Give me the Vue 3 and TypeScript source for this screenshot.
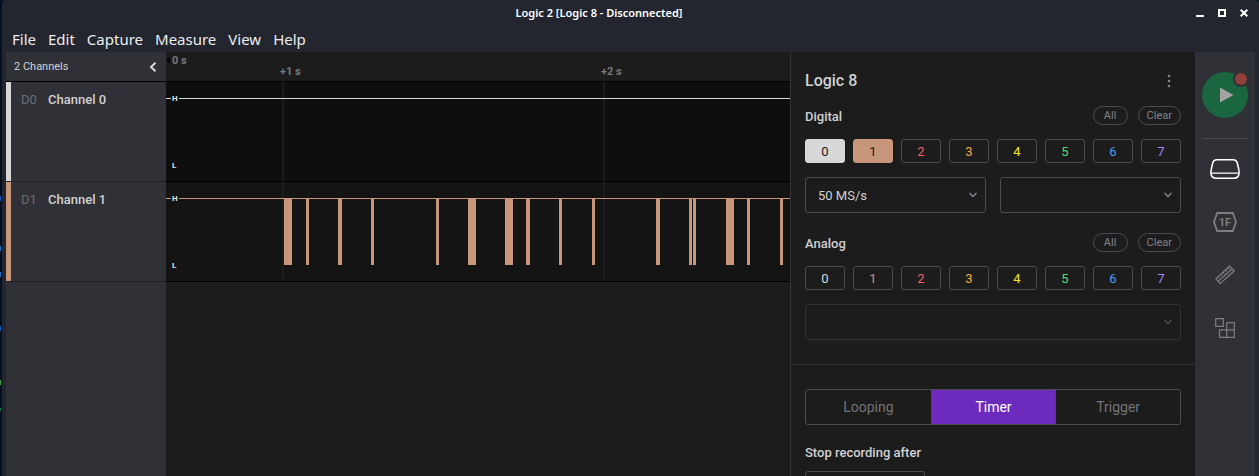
<script setup lang="ts">
import { ref } from 'vue'

interface Channel {
  id: string
  name: string
  color: string
  pulses: [number, number][]
}

const menus = ['File', 'Edit', 'Capture', 'Measure', 'View', 'Help']

const channels: Channel[] = [
  { id: 'D0', name: 'Channel 0', color: '#d8d8d8', pulses: [] },
  {
    id: 'D1',
    name: 'Channel 1',
    color: '#c8967a',
    pulses: [
      [118, 8], [140, 3], [172, 4], [205, 3], [270, 3], [302, 8], [339, 8], [360, 4],
      [393, 3], [426, 3], [490, 4], [523, 3], [527, 3], [560, 8], [581, 3], [614, 3],
    ],
  },
]

const ticks = [
  { x: 117, label: '+1 s' },
  { x: 438, label: '+2 s' },
]

const inputColors = ['#d8d8d8', '#c8967a', '#f0616d', '#f5a742', '#f5e731', '#50dc64', '#4a9ff5', '#a583f5']

const digital = ref([true, true, false, false, false, false, false, false])
const analog = ref<boolean[]>(Array(8).fill(false))
const mode = ref('Timer')
const modes = ['Looping', 'Timer', 'Trigger']
const duration = ref('')

const setAll = (list: boolean[], value: boolean) => list.fill(value)
</script>

<template>
  <div class="desktop">
    <svg class="wallpaper" aria-hidden="true">
      <rect y="196" width="1" height="5" fill="#0b4fb5" />
      <rect y="246" width="1" height="5" fill="#1d6fc4" />
      <rect y="272" width="1" height="5" fill="#1d6fc4" />
      <rect y="326" width="1" height="5" fill="#0b5cb5" />
      <rect y="380" width="1" height="5" fill="#3fa04a" />
      <rect y="408" width="1" height="3" fill="#127a4c" />
    </svg>
    <div class="window">
      <header class="titlebar">
        <h1>Logic 2 [Logic 8 - Disconnected]</h1>
        <div class="controls">
          <button type="button" aria-label="Minimize">
            <svg width="8" height="8"><path d="M0 6h8v2H0z" fill="#fff" /></svg>
          </button>
          <button type="button" aria-label="Maximize">
            <svg width="8" height="8"><path d="M1 1h6v6H1z" fill="none" stroke="#fff" stroke-width="2" /></svg>
          </button>
          <button type="button" aria-label="Close">
            <svg width="8" height="8"><path d="M.7 .7l6.6 6.6M7.3 .7L.7 7.3" stroke="#fff" stroke-width="2" /></svg>
          </button>
        </div>
      </header>
      <nav class="menubar">
        <button v-for="m in menus" :key="m" type="button">{{ m }}</button>
      </nav>

      <main class="workspace">
        <section class="scope">
          <div class="channel-head">
            <span>2 Channels</span>
            <button type="button" aria-label="Collapse channels">
              <svg width="8" height="10"><path d="M6.500 .7L2 5l4.500 4.300" fill="none" stroke="#d4d4d6" stroke-width="2" /></svg>
            </button>
          </div>
          <svg class="ruler">
            <path d="M0 8.500L4 5.500v6z" fill="#000" />
            <text x="6" y="12">0 s</text>
            <g v-for="t in ticks" :key="t.x">
              <text :x="t.x - 3" y="23">{{ t.label }}</text>
              <rect :x="t.x - 1" y="26" width="2" height="4" fill="#222" />
            </g>
          </svg>
          <template v-for="(c, i) in channels" :key="c.id">
            <div class="channel">
              <i class="stripe" :style="{ background: c.color }"></i>
              <span class="channel-id">{{ c.id }}</span>
              <span class="channel-name">{{ c.name }}</span>
            </div>
            <svg class="wave" :class="{ alt: i % 2 === 1 }">
              <rect v-for="t in ticks" :key="t.x" :x="t.x - 1" width="2" height="100%" class="grid-line" />
              <rect y="16" width="100%" height="1" :fill="c.color" />
              <rect v-for="p in c.pulses" :key="p[0]" :x="p[0]" y="16" :width="p[1]" height="67" :fill="c.color" />
              <rect x="5" y="12" width="8" height="9" class="tag-bg" />
              <text x="6" y="19">H</text>
              <text x="6" y="86">L</text>
            </svg>
          </template>
          <div class="sidebar-rest"></div>
          <div></div>
        </section>

        <aside class="panel">
          <section class="device">
            <div class="device-head">
              <h2>Logic 8</h2>
              <button type="button" class="more" aria-label="Device options">
                <svg width="4" height="14" fill="#85858c">
                  <circle cx="2" cy="2" r="1.300" /><circle cx="2" cy="7" r="1.300" /><circle cx="2" cy="12" r="1.300" />
                </svg>
              </button>
            </div>

            <div class="group-head">
              <h3>Digital</h3>
              <button type="button" class="pill" @click="setAll(digital, true)">All</button>
              <button type="button" class="pill" @click="setAll(digital, false)">Clear</button>
            </div>
            <div class="inputs">
              <button
                v-for="(color, n) in inputColors" :key="n" type="button"
                :class="{ on: digital[n] }" :aria-pressed="digital[n]"
                :style="{ '--tint': color }" @click="digital[n] = !digital[n]"
              >{{ n }}</button>
            </div>
            <div class="selects">
              <label class="select">
                <select aria-label="Sample rate"><option>50 MS/s</option></select>
                <svg width="10" height="6"><path d="M1.500 1L5 4.500 8.500 1" /></svg>
              </label>
              <label class="select">
                <select aria-label="Logic voltage"><option></option></select>
                <svg width="10" height="6"><path d="M1.500 1L5 4.500 8.500 1" /></svg>
              </label>
            </div>

            <div class="group-head second">
              <h3>Analog</h3>
              <button type="button" class="pill" @click="setAll(analog, true)">All</button>
              <button type="button" class="pill" @click="setAll(analog, false)">Clear</button>
            </div>
            <div class="inputs">
              <button
                v-for="(color, n) in inputColors" :key="n" type="button"
                :class="{ on: analog[n] }" :aria-pressed="analog[n]"
                :style="{ '--tint': color }" @click="analog[n] = !analog[n]"
              >{{ n }}</button>
            </div>
            <div class="selects">
              <label class="select disabled">
                <select aria-label="Analog sample rate" disabled><option></option></select>
                <svg width="10" height="6"><path d="M1.500 1L5 4.500 8.500 1" /></svg>
              </label>
            </div>
          </section>

          <section class="recording">
            <div class="modes" role="radiogroup" aria-label="Capture mode">
              <label v-for="m in modes" :key="m" :class="{ active: mode === m }">
                <input v-model="mode" type="radio" name="mode" :value="m" />{{ m }}
              </label>
            </div>
            <label class="field-label" for="duration">Stop recording after</label>
            <input id="duration" v-model="duration" class="duration" type="text" />
          </section>
        </aside>

        <nav class="rail">
          <button type="button" aria-label="Start capture">
            <svg width="46" height="46">
              <circle cx="23" cy="23" r="23" fill="#196640" />
              <path d="M18 15.500v15L31.500 23z" fill="#a3a3a3" />
              <circle cx="39" cy="7" r="8" fill="#303136" />
              <circle cx="39" cy="7" r="6" fill="#8f4038" />
            </svg>
          </button>
          <hr />
          <button type="button" class="tool" aria-label="Device">
            <svg width="30" height="20" fill="none" stroke="#fff" stroke-width="1.600">
              <path d="M7 .8h16c2.400 0 3.800 1.400 4.400 3.600.9 3 1.600 6.400 1.700 9.400.1 3-1.700 5.400-5.100 5.400H6C2.600 19.200 .8 16.800 .9 13.800 1 10.800 1.700 7.400 2.600 4.400 3.200 2.200 4.600.8 7 .8z" />
              <path d="M1 14.200h28" stroke="#d0d0d2" />
            </svg>
          </button>
          <button type="button" class="tool" aria-label="Analyzers">
            <svg width="24" height="20" fill="none" stroke="#7d7e82" stroke-width="1.800">
              <path d="M4.200 1h15.600L23 10l-3.200 9H4.200L1 10z" />
              <text x="12" y="14" text-anchor="middle" fill="#7d7e82" stroke="none">1F</text>
            </svg>
          </button>
          <button type="button" class="tool" aria-label="Measurements">
            <svg width="20" height="20" fill="none" stroke="#7d7e82" stroke-width="1.200">
              <path d="M.8 13.600L14.600 1.200l4.600 4.600L5 18.600z" />
              <path d="M3.200 16.400L17.200 3.800M3 11.600l1.500 1.600M5.400 9.400L7 11M7.900 7.200l1.500 1.600M10.300 5l1.500 1.600M12.700 2.900l1.500 1.600" />
            </svg>
          </button>
          <button type="button" class="tool" aria-label="Extensions">
            <svg width="20" height="20" fill="none" stroke="#7d7e82" stroke-width="1.200">
              <path d="M.7 .7h7.600v7.600H.7zM11.700 4.700h7.600v14.600H4.500v-7.400h14.800M11.700 4.700v14.600" />
            </svg>
          </button>
        </nav>
      </main>
    </div>
  </div>
</template>

<style>
body {
  background: #03101f;
}
</style>

<style scoped>
* {
  box-sizing: border-box;
}
.desktop {
  display: flex;
  height: 100vh;
  overflow: hidden;
  font-family: Roboto, "Liberation Sans", sans-serif;
  font-size: 13px;
  color: #d0d0d2;
}
.wallpaper {
  flex: none;
  width: 2px;
  height: 100%;
}
.window {
  flex: 1;
  min-width: 0;
  display: flex;
  flex-direction: column;
  background: #23262f;
  border-radius: 4px 4px 0 0;
}
button {
  margin: 0;
  padding: 0;
  border: 0;
  background: none;
  color: inherit;
  font: inherit;
  cursor: pointer;
}
svg {
  display: block;
}
h1, h2, h3 {
  margin: 0;
}
.titlebar {
  flex: none;
  display: flex;
  align-items: center;
  height: 26px;
  padding-right: 11px;
}
.titlebar h1 {
  flex: 1;
  text-align: center;
  font: 600 11px/26px "Noto Sans", sans-serif;
  color: #fff;
}
.controls {
  display: flex;
  gap: 14px;
}
.menubar {
  flex: none;
  display: flex;
  gap: 12px;
  height: 26px;
  padding-left: 10px;
  font: 15px/26px "Noto Sans", sans-serif;
  color: #eceded;
}
.workspace {
  flex: 1;
  min-height: 0;
  display: flex;
  margin: 0 4px;
  background: #1c1c1c;
}
.scope {
  flex: 1;
  min-width: 0;
  display: grid;
  grid-template-columns: 160px minmax(0, 1fr);
  grid-template-rows: 30px 100px 100px 1fr;
}
.channel-head {
  display: flex;
  align-items: center;
  justify-content: space-between;
  padding: 0 9px 0 8px;
  background: #303136;
  border-bottom: 1px solid #000;
  font-size: 11px;
}
.ruler {
  width: 100%;
  height: 30px;
  border-bottom: 1px solid #000;
  font-size: 11px;
  font-weight: 700;
  fill: #77777f;
}
.channel {
  display: flex;
  background: #303136;
  border-bottom: 1px solid #222226;
  font-weight: 500;
  line-height: 36px;
}
.stripe {
  width: 5px;
  margin-right: 10px;
}
.channel-id {
  width: 27px;
  color: #6c6d71;
  font-weight: 400;
}
.wave {
  width: 100%;
  height: 100px;
  background: #0e0e0e;
  border-bottom: 1px solid #000;
  --row: #0e0e0e;
}
.wave.alt {
  background: #141414;
  --row: #141414;
}
.wave text {
  font-size: 8px;
  font-weight: 700;
  fill: #e4e4e4;
}
.tag-bg {
  fill: var(--row);
}
.grid-line {
  fill: #1c1c1c;
}
.sidebar-rest {
  background: #303136;
}
.panel {
  flex: none;
  width: 405px;
  border-left: 1px solid #33333a;
  overflow: hidden;
}
.device {
  padding: 10px 14px 24px;
  border-bottom: 1px solid #34343a;
}
.device-head {
  display: flex;
  align-items: center;
  justify-content: space-between;
  height: 36px;
  margin-bottom: 8px;
}
.device-head h2 {
  font-size: 16px;
  font-weight: 500;
}
.more {
  padding: 2px 10px 0;
}
.group-head {
  display: flex;
  align-items: center;
  gap: 10px;
  height: 19px;
  margin-bottom: 14px;
}
.group-head.second {
  margin-top: 20px;
}
.group-head h3 {
  flex: 1;
  padding-top: 2px;
  font-size: 13px;
  font-weight: 500;
}
.pill {
  min-width: 35px;
  height: 19px;
  padding: 0 8px;
  border: 1px solid #4a4a50;
  border-radius: 10px;
  font-size: 11px;
  line-height: 17px;
  color: #83838b;
}
.inputs {
  display: grid;
  grid-template-columns: repeat(8, 1fr);
  gap: 8px;
  margin-bottom: 14px;
}
.inputs button {
  height: 24px;
  border: 1px solid #4a4a50;
  border-radius: 3px;
  color: var(--tint);
}
.inputs .on {
  background: var(--tint);
  border-color: var(--tint);
  color: #1c1c1c;
}
.selects {
  display: flex;
  gap: 14px;
}
.select {
  flex: 1;
  display: grid;
  align-items: center;
}
.select select {
  grid-area: 1 / 1;
  width: 100%;
  height: 36px;
  padding: 0 12px;
  appearance: none;
  border: 1px solid #4a4a50;
  border-radius: 3px;
  background: none;
  color: #d0d0d2;
  font: 13px Roboto, sans-serif;
}
.select svg {
  grid-area: 1 / 1;
  justify-self: end;
  margin-right: 8px;
  pointer-events: none;
  fill: none;
  stroke: #85858f;
  stroke-width: 1.500;
}
.select.disabled select {
  border-color: #313136;
  opacity: 1;
}
.select.disabled svg {
  stroke: #4c4c52;
}
.recording {
  padding: 24px 14px 0;
}
.modes {
  display: grid;
  grid-template-columns: repeat(3, 1fr);
  height: 36px;
  border: 1px solid #4a4a50;
  border-radius: 3px;
  overflow: hidden;
}
.modes label {
  text-align: center;
  font-size: 14px;
  line-height: 34px;
  color: #73737a;
  cursor: pointer;
}
.modes label + label {
  border-left: 1px solid #4a4a50;
}
.modes .active {
  background: #6c2bbd;
  color: #fff;
}
.modes input {
  appearance: none;
  width: 0;
  height: 0;
  margin: 0;
}
.field-label {
  display: block;
  margin: 19px 0 9px;
  line-height: 18px;
  font-weight: 500;
}
.duration {
  display: block;
  width: 120px;
  height: 36px;
  padding: 0 12px;
  border: 1px solid #4a4a50;
  border-radius: 3px;
  background: none;
  color: inherit;
  font: inherit;
}
.rail {
  flex: none;
  width: 60px;
  display: flex;
  flex-direction: column;
  align-items: center;
  padding-top: 20px;
  background: #303136;
}
.rail hr {
  width: 46px;
  margin: 20px 0;
  border: 0;
  border-top: 1px solid #4a4a50;
}
.tool {
  margin-bottom: 33px;
}
.tool text {
  font-size: 11px;
  font-weight: 700;
}
</style>
